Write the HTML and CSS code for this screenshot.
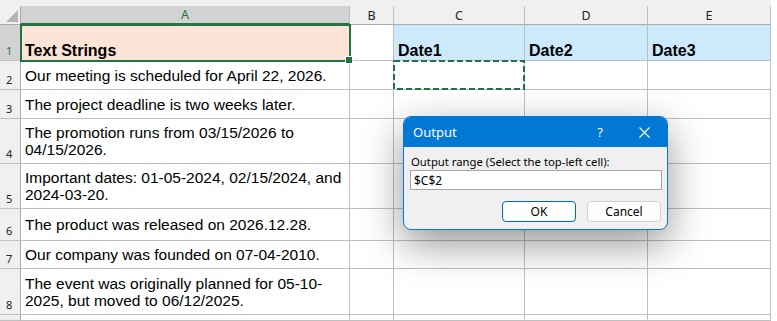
FILE: index.html
```html
<!DOCTYPE html>
<html lang="en">
<head>
    <meta charset="UTF-8">
    <meta name="viewport" content="width=device-width, initial-scale=1.0">
    <title>Extract Dates - Output</title>
    <link rel="stylesheet" href="styles.css">
</head>
<body>
    <div class="sheet">
        <div class="top-strip"></div>
        <div class="grid">
            <!-- column headers -->
            <div class="corner"><span class="tri"></span></div>
            <div class="col-head selected">A</div>
            <div class="col-head">B</div>
            <div class="col-head">C</div>
            <div class="col-head">D</div>
            <div class="col-head">E</div>

            <!-- row 1 -->
            <div class="row-head selected">1</div>
            <div class="cell title-cell active">Text Strings<span class="handle"></span></div>
            <div class="cell"></div>
            <div class="cell date-head">Date1</div>
            <div class="cell date-head">Date2</div>
            <div class="cell date-head">Date3</div>

            <div class="row-head">2</div>
            <div class="cell">Our meeting is scheduled for April 22, 2026.</div>
            <div class="cell"></div>
            <div class="cell copy-cell">
                <svg class="ants" viewBox="0 0 132 31" preserveAspectRatio="none">
                    <rect x="1" y="1" width="130" height="28" fill="none" stroke="#217346" stroke-width="2" stroke-dasharray="6 3"/>
                </svg>
            </div>
            <div class="cell"></div>
            <div class="cell"></div>

            <div class="row-head">3</div>
            <div class="cell">The project deadline is two weeks later.</div>
            <div class="cell"></div>
            <div class="cell"></div>
            <div class="cell"></div>
            <div class="cell"></div>

            <div class="row-head">4</div>
            <div class="cell">The promotion runs from 03/15/2026 to<br>04/15/2026.</div>
            <div class="cell"></div>
            <div class="cell"></div>
            <div class="cell"></div>
            <div class="cell"></div>

            <div class="row-head">5</div>
            <div class="cell">Important dates: 01-05-2024, 02/15/2024, and<br>2024-03-20.</div>
            <div class="cell"></div>
            <div class="cell"></div>
            <div class="cell"></div>
            <div class="cell"></div>

            <div class="row-head">6</div>
            <div class="cell">The product was released on 2026.12.28.</div>
            <div class="cell"></div>
            <div class="cell"></div>
            <div class="cell"></div>
            <div class="cell"></div>

            <div class="row-head">7</div>
            <div class="cell">Our company was founded on 07-04-2010.</div>
            <div class="cell"></div>
            <div class="cell"></div>
            <div class="cell"></div>
            <div class="cell"></div>

            <div class="row-head">8</div>
            <div class="cell">The event was originally planned for 05-10-<br>2025, but moved to 06/12/2025.</div>
            <div class="cell"></div>
            <div class="cell"></div>
            <div class="cell"></div>
            <div class="cell"></div>

            <div class="row-head"></div>
            <div class="cell"></div>
            <div class="cell"></div>
            <div class="cell"></div>
            <div class="cell"></div>
            <div class="cell"></div>
        </div>

        <!-- Output dialog -->
        <div class="dialog">
            <div class="dialog-title">
                <span class="dialog-name">Output</span>
                <span class="help">?</span>
                <svg class="close" width="11" height="11" viewBox="0 0 11 11">
                    <path d="M0.5 0.5 L10.5 10.5 M10.5 0.5 L0.5 10.5" stroke="#fff" stroke-width="1.1" fill="none"/>
                </svg>
            </div>
            <div class="dialog-body">
                <label for="outputRange">Output range (Select the top-left cell):</label>
                <input type="text" id="outputRange" value="$C$2">
                <div class="dialog-buttons">
                    <button class="btn btn-ok">OK</button>
                    <button class="btn">Cancel</button>
                </div>
            </div>
        </div>
    </div>
</body>
</html>
```

FILE: styles.css
```css
body {
    margin: 0;
    padding: 0;
    background-color: #fff;
    font-family: "Liberation Sans", Arial, sans-serif;
}
.sheet {
    position: relative;
    width: 771px;
}
.top-strip {
    height: 6px;
    background-color: #f0f0f0;
}
.grid {
    display: grid;
    grid-template-columns: 21px 329px 44px 131px 123px 123px;
    grid-template-rows: 19px 36px 29px 29px 45px 45px 32px 28px 46px 6px;
}
.grid > div {
    box-sizing: border-box;
}
.corner {
    background-color: #f0f0f0;
    border-right: 1px solid #ababab;
    border-bottom: 1px solid #ababab;
    padding: 4px 0 0 6px;
}
.tri {
    display: block;
    width: 12px;
    height: 12px;
    background-color: #b4b4b4;
    clip-path: polygon(100% 0, 100% 100%, 0 100%);
}
.col-head {
    background-color: #f0f0f0;
    border-right: 1px solid #c0c0c0;
    border-bottom: 1px solid #ababab;
    display: flex;
    align-items: center;
    justify-content: center;
    font-family: "Noto Sans", sans-serif;
    font-size: 12.5px;
    color: #222;
}
.col-head.selected {
    background-color: #d2d2d2;
    color: #217346;
    border-bottom: 2px solid #217346;
}
.row-head {
    background-color: #f0f0f0;
    border-right: 1px solid #ababab;
    border-bottom: 1px solid #c0c0c0;
    display: flex;
    align-items: flex-end;
    padding: 0 0 2px 6px;
    font-family: "Noto Sans", sans-serif;
    font-size: 11px;
    line-height: 14px;
    color: #222;
}
.row-head.selected {
    background-color: #d2d2d2;
    color: #217346;
}
.cell {
    border-right: 1px solid #bfbfbf;
    border-bottom: 1px solid #bfbfbf;
    display: flex;
    align-items: center;
    padding: 0 2px 0 4px;
    font-size: 15.5px;
    line-height: 17px;
    color: #000;
    white-space: nowrap;
    position: relative;
}
.title-cell {
    background-color: #fce4d6;
    align-items: flex-end;
    padding-bottom: 1px;
    font-size: 16px;
    font-weight: bold;
}
.date-head {
    background-color: #cceafc;
    align-items: flex-end;
    padding-bottom: 1px;
    font-size: 16px;
    font-weight: bold;
}
.active {
    outline: 2px solid #217346;
    outline-offset: -1px;
    z-index: 1;
}
.handle {
    position: absolute;
    right: -4px;
    bottom: -4px;
    width: 6px;
    height: 6px;
    background-color: #217346;
    border: 1px solid #fff;
}
.ants {
    position: absolute;
    left: -1px;
    top: -1px;
    width: 132px;
    height: 31px;
}

/* dialog */
.dialog {
    position: absolute;
    left: 403px;
    top: 116px;
    width: 265px;
    height: 114px;
    box-sizing: border-box;
    border: 1px solid #0078d4;
    border-radius: 8px;
    overflow: hidden;
    background-color: #f0f0f0;
    box-shadow: 0 14px 40px rgba(0, 0, 0, 0.42);
    font-family: "Noto Sans", sans-serif;
    z-index: 5;
}
.dialog-title {
    height: 30px;
    background-color: #0078d4;
    color: #fff;
    display: flex;
    align-items: center;
    padding: 0 0 0 9px;
}
.dialog-name {
    flex: 1;
    font-size: 13px;
}
.help {
    font-size: 13px;
    margin-right: 36px;
}
.close {
    margin-right: 17px;
}
.dialog-body {
    padding: 6px 5px 0 6px;
}
.dialog-body label {
    display: block;
    font-size: 11.3px;
    line-height: 17px;
    color: #000;
    padding-left: 1px;
}
.dialog-body input {
    display: block;
    box-sizing: border-box;
    width: 252px;
    height: 20px;
    margin: 0;
    padding: 0 3px;
    border: 1px solid #a5a5a5;
    background-color: #fff;
    font-family: "Noto Sans", sans-serif;
    font-size: 12px;
    color: #000;
    outline: none;
}
.dialog-buttons {
    display: flex;
    justify-content: flex-end;
    gap: 11px;
    margin-top: 11px;
    padding-right: 1px;
}
.btn {
    box-sizing: border-box;
    width: 74px;
    height: 21px;
    border: 1px solid #d0d0d0;
    border-radius: 4px;
    background-color: #fdfdfd;
    font-family: "Noto Sans", sans-serif;
    font-size: 12px;
    color: #000;
    padding: 0;
}
.btn-ok {
    border: 1px solid #0067c0;
}
```
